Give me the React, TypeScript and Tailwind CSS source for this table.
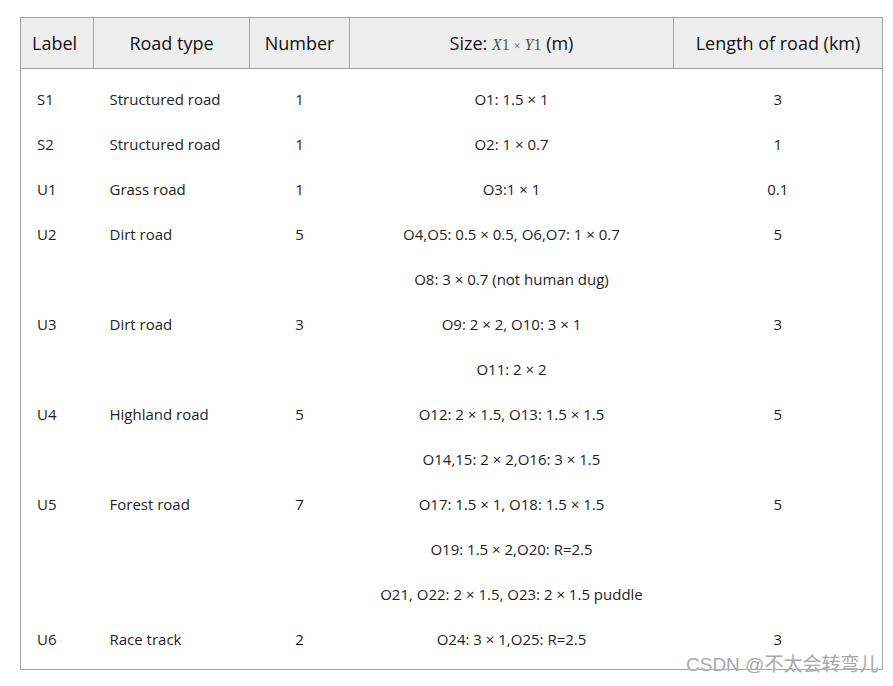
import React from 'react'

type Row = { label: string; type: string; num: string; size: string; len: string }

const rows: Row[] = [
  { label: 'S1', type: 'Structured road', num: '1', size: 'O1: 1.5 × 1', len: '3' },
  { label: 'S2', type: 'Structured road', num: '1', size: 'O2: 1 × 0.7', len: '1' },
  { label: 'U1', type: 'Grass road', num: '1', size: 'O3:1 × 1', len: '0.1' },
  { label: 'U2', type: 'Dirt road', num: '5', size: 'O4,O5: 0.5 × 0.5, O6,O7: 1 × 0.7', len: '5' },
  { label: '', type: '', num: '', size: 'O8: 3 × 0.7 (not human dug)', len: '' },
  { label: 'U3', type: 'Dirt road', num: '3', size: 'O9: 2 × 2, O10: 3 × 1', len: '3' },
  { label: '', type: '', num: '', size: 'O11: 2 × 2', len: '' },
  { label: 'U4', type: 'Highland road', num: '5', size: 'O12: 2 × 1.5, O13: 1.5 × 1.5', len: '5' },
  { label: '', type: '', num: '', size: 'O14,15: 2 × 2,O16: 3 × 1.5', len: '' },
  { label: 'U5', type: 'Forest road', num: '7', size: 'O17: 1.5 × 1, O18: 1.5 × 1.5', len: '5' },
  { label: '', type: '', num: '', size: 'O19: 1.5 × 2,O20: R=2.5', len: '' },
  { label: '', type: '', num: '', size: 'O21, O22: 2 × 1.5, O23: 2 × 1.5 puddle', len: '' },
  { label: 'U6', type: 'Race track', num: '2', size: 'O24: 3 × 1,O25: R=2.5', len: '3' },
]

export default function App() {
  return (
    <div className="relative w-[893px] h-[686px] bg-white pl-[20px] pt-[17px] font-['Open_Sans',sans-serif] text-[#1e1e1e]">
      <table className="w-[862px] border-collapse border border-[#a3a3a3] table-fixed">
        <colgroup>
          <col className="w-[73px]" />
          <col className="w-[156px]" />
          <col className="w-[100px]" />
          <col className="w-[324px]" />
          <col className="w-[209px]" />
        </colgroup>
        <thead>
          <tr className="bg-[#eeeeee] h-[51px] text-[18px] text-[#111]">
            <th className="border border-[#a3a3a3] font-medium text-left pl-[11px]">Label</th>
            <th className="border border-[#a3a3a3] font-medium">Road type</th>
            <th className="border border-[#a3a3a3] font-medium">Number</th>
            <th className="border border-[#a3a3a3] font-medium">
              Size:{' '}
              <span className="font-['Liberation_Serif',serif] font-normal text-[16px] text-[#555]">
                <i>X</i>1 <span className="text-[12px]">×</span> <i>Y</i>1
              </span>{' '}
              (m)
            </th>
            <th className="border border-[#a3a3a3] font-medium">Length of road (km)</th>
          </tr>
        </thead>
        <tbody className="text-[15px]">
          <tr className="h-[8px]">
            <td colSpan={5} />
          </tr>
          {rows.map((r, i) => (
            <tr key={i} className="h-[45px]">
              <td className="pl-[16px]">{r.label}</td>
              <td className="pl-[16px]">{r.type}</td>
              <td className="text-center">{r.num}</td>
              <td className="text-center">{r.size}</td>
              <td className="text-center">{r.len}</td>
            </tr>
          ))}
          <tr className="h-[8px]">
            <td colSpan={5} />
          </tr>
        </tbody>
      </table>
      <div className="absolute left-[686px] top-[654px] text-[19px] leading-[22px] text-[#a8a8a8] font-['Liberation_Sans','Noto_Sans_CJK_SC',sans-serif] [text-shadow:0_0_1px_#fff]">
        CSDN @不太会转弯儿
      </div>
    </div>
  )
}
